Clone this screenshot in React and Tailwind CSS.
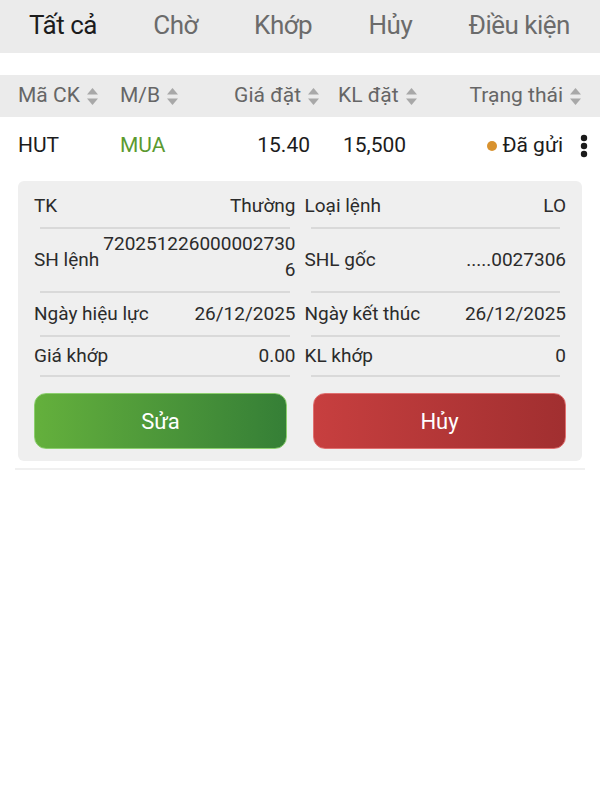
const tabs = ["Tất cả", "Chờ", "Khớp", "Hủy", "Điều kiện"];

const SortIcon = () => (
    <svg width="13" height="19" viewBox="0 0 13 19" className="ml-[6px] shrink-0">
        <path d="M6.5 1 L12 7.5 H1 Z" fill="#a8a8a8" />
        <path d="M6.5 18 L12 11.5 H1 Z" fill="#a8a8a8" />
    </svg>
);

const Kebab = () => (
    <svg width="8" height="24" viewBox="0 0 8 24" className="shrink-0">
        <circle cx="4" cy="4" r="3.2" fill="#1a1a1a" />
        <circle cx="4" cy="12" r="3.2" fill="#1a1a1a" />
        <circle cx="4" cy="20" r="3.2" fill="#1a1a1a" />
    </svg>
);

const HeadCell = ({ label, className = "" }) => (
    <div className={`flex items-center ${className}`}>
        <span>{label}</span>
        <SortIcon />
    </div>
);

const Divider = () => <div className="mx-[6px] h-[2px] bg-[#d9d9d9]" />;

// one label / value pair of the detail card
const InfoCell = ({ label, value, height = "h-[42px]" }) => (
    <div>
        <div className={`${height} flex items-center justify-between`}>
            <span className="whitespace-nowrap">{label}</span>
            <span className="whitespace-nowrap">{value}</span>
        </div>
        <Divider />
    </div>
);

const App = () => {
    return (
        <div className="w-[600px] h-[800px] bg-white text-[#1c1c1c] font-['Roboto',sans-serif]">
            {/* Tabs */}
            <div className="h-[53px] bg-[#ebebeb] flex items-center justify-between pl-[29px] pr-[30px] pb-[2px] text-[26px] tracking-[-0.5px]">
                {tabs.map((tab, i) => (
                    <div key={tab} className={i === 0 ? "text-[#1c1c1c]" : "text-[#6b6b6b]"}>
                        {tab}
                    </div>
                ))}
            </div>

            {/* Table header */}
            <div className="mt-[22px] h-[42px] bg-[#ebebeb] flex items-center px-[18px] text-[21px] text-[#666]">
                <HeadCell label="Mã CK" className="w-[102px]" />
                <HeadCell label="M/B" className="w-[110px]" />
                <HeadCell label="Giá đặt" className="w-[90px] justify-end" />
                <HeadCell label="KL đặt" className="w-[100px] pl-[18px]" />
                <HeadCell label="Trạng thái" className="flex-1 justify-end" />
            </div>

            {/* Data row */}
            <div className="h-[58px] flex items-center pl-[18px] pr-[12px] text-[21px]">
                <div className="w-[102px]">HUT</div>
                <div className="w-[110px] text-[#5b9a2f]">MUA</div>
                <div className="w-[80px] text-right">15.40</div>
                <div className="w-[120px] pl-[33px]">15,500</div>
                <div className="flex-1 flex items-center justify-end">
                    <span className="w-[10px] h-[10px] rounded-full bg-[#d8922f] mr-[5px]" />
                    <span>Đã gửi</span>
                </div>
                <div className="ml-[17px]">
                    <Kebab />
                </div>
            </div>

            {/* Detail card */}
            <div className="mx-[18px] mt-[6px] bg-[#efefef] rounded-md px-[16px] pt-[4px] pb-[12px] text-[19px] text-[#2b2b2b]">
                <div className="grid grid-cols-2 gap-x-[9px]">
                    <InfoCell label="TK" value="Thường" />
                    <InfoCell label="Loại lệnh" value="LO" />

                    <div>
                        <div className="h-[62px] flex justify-between">
                            <span className="self-center shrink-0 pt-[1px]">SH lệnh</span>
                            <span className="flex-1 min-w-0 mt-[2px] text-right break-all leading-[26px]">7202512260000027306</span>
                        </div>
                        <Divider />
                    </div>
                    <InfoCell label="SHL gốc" value=".....0027306" height="h-[62px]" />

                    <InfoCell label="Ngày hiệu lực" value="26/12/2025" />
                    <InfoCell label="Ngày kết thúc" value="26/12/2025" />

                    <InfoCell label="Giá khớp" value="0.00" height="h-[38px]" />
                    <InfoCell label="KL khớp" value="0" height="h-[38px]" />
                </div>

                <div className="grid grid-cols-2 gap-x-[26px] mt-[16px]">
                    <button className="h-[56px] rounded-[12px] border border-[#8ccf6e] text-white text-[22px] bg-gradient-to-r from-[#64b03c] to-[#357f36]">
                        Sửa
                    </button>
                    <button className="h-[56px] rounded-[12px] border border-[#e07070] text-white text-[22px] bg-gradient-to-r from-[#c73f3f] to-[#a12f30]">
                        Hủy
                    </button>
                </div>
            </div>
            <div className="mx-[15px] mt-[7px] h-[2px] bg-[#f0f0f0]" />
        </div>
    );
};

export default App;
